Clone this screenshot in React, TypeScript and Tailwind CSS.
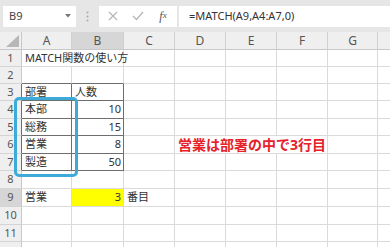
import React from "react";

const colW = ["w-[50px]", "w-[52px]", "w-[51px]", "w-[51px]", "w-[51px]", "w-[51px]", "w-[50px]", "w-[40px]"];
const rowH = ["h-[17px]", "h-[17px]", "h-[17px]", "h-[18px]", "h-[17px]", "h-[18px]", "h-[17px]", "h-[18px]", "h-[18px]", "h-[18px]", "h-[17px]", "h-[18px]"];
const letters = ["A", "B", "C", "D", "E", "F", "G", ""];

type CellDef = {
  text?: string;
  right?: boolean;
  bg?: string;
  darkR?: boolean;
  darkB?: boolean;
  span?: number;
  extra?: string;
};

function rowCells(r: number): CellDef[] {
  const base: CellDef[] = letters.map(() => ({}));
  const tbl = (c: number) => {
    base[c].darkR = true;
    base[c].darkB = true;
  };
  if (r === 1) {
    return [{ text: "MATCH関数の使い方", span: 2 }, {}, {}, {}, {}, {}, {}];
  }
  if (r === 2) {
    base[0].darkB = true;
    base[1].darkB = true;
  }
  if (r >= 3 && r <= 7) {
    tbl(0);
    tbl(1);
  }
  if (r === 3) {
    base[0].text = "部署";
    base[1].text = "人数";
  }
  const data: Record<number, [string, string]> = {
    4: ["本部", "10"],
    5: ["総務", "15"],
    6: ["営業", "8"],
    7: ["製造", "50"],
  };
  if (data[r]) {
    base[0].text = data[r][0];
    base[1].text = data[r][1];
    base[1].right = true;
  }
  if (r === 6) {
    return [
      base[0],
      base[1],
      {},
      { text: "営業は部署の中で3行目", span: 3, extra: "text-[#e5222a] font-bold text-[14px] pl-[2px]" },
      {},
      {},
    ];
  }
  if (r === 9) {
    base[0].text = "営業";
    base[1].text = "3";
    base[1].right = true;
    base[1].bg = "bg-[#ffff00]";
    base[2].text = "番目";
  }
  return base;
}

function Row({ r }: { r: number }) {
  const cells = rowCells(r);
  const selected = r === 9;
  const hdrDark = r >= 3 && r <= 7;
  let col = 0;
  const out: React.ReactNode[] = [];
  cells.forEach((c, i) => {
    const span = c.span ?? 1;
    const w = span > 1 ? (col === 0 ? "w-[102px]" : "w-[153px]") : colW[col];
    out.push(
      <div
        key={i}
        className={`${w} shrink-0 h-full border-r border-b ${c.darkR ? "border-r-[#6e6e6e]" : "border-r-[#dadada]"} ${
          c.darkB ? "border-b-[#6e6e6e]" : "border-b-[#dadada]"
        } ${c.bg ?? ""} flex items-center ${c.right ? "justify-end pr-[2px]" : "pl-[3px]"} whitespace-nowrap overflow-visible ${
          c.extra ?? "text-[11px] text-[#333]"
        }`}
      >
        {c.text}
      </div>
    );
    col += span;
  });
  return (
    <div className={`flex ${rowH[r - 1]}`}>
      <div
        className={`w-[22px] shrink-0 h-full border-r border-b ${hdrDark ? "border-r-[#6e6e6e]" : "border-r-[#c8c8c8]"} border-b-[#d4d4d4] ${
          selected ? "bg-[#d6d6d6]" : "bg-[#efefef]"
        } text-[#555] flex items-center justify-center text-[11px]`}
      >
        {r <= 11 ? r : ""}
      </div>
      {out}
    </div>
  );
}

export default function App() {
  return (
    <div
      className="relative w-[390px] h-[247px] overflow-hidden bg-white"
      style={{ fontFamily: '"Noto Sans", "Noto Sans CJK JP", sans-serif' }}
    >
      {/* Formula bar */}
      <div className="h-[32px] bg-[#e6e6e6] flex items-center pl-[3px]">
        <div className="w-[73px] h-[21px] bg-white flex items-center justify-between pl-[6px] pr-[5px] text-[11px] text-[#444]">
          <span>B9</span>
          <svg width="6" height="4" viewBox="0 0 6 4">
            <path d="M0 0 L6 0 L3 3.5 Z" fill="#777" />
          </svg>
        </div>
        <div className="w-[23px] flex justify-center">
          <svg width="3" height="11" viewBox="0 0 3 11">
            <circle cx="1.5" cy="1.5" r="1" fill="#aaa" />
            <circle cx="1.5" cy="5.5" r="1" fill="#aaa" />
            <circle cx="1.5" cy="9.5" r="1" fill="#aaa" />
          </svg>
        </div>
        <div className="w-[78px] h-[21px] bg-white flex items-center">
          <div className="w-[28px] flex justify-center">
            <svg width="10" height="10" viewBox="0 0 10 10">
              <path d="M1 1 L9 9 M9 1 L1 9" stroke="#b5b5b5" strokeWidth="1.2" fill="none" />
            </svg>
          </div>
          <div className="w-[22px] flex justify-center">
            <svg width="12" height="10" viewBox="0 0 12 10">
              <path d="M1 5 L4.5 8.5 L11 1" stroke="#b5b5b5" strokeWidth="1.2" fill="none" />
            </svg>
          </div>
          <div
            className="w-[28px] flex justify-center text-[12px] italic text-[#555]"
            style={{ fontFamily: '"Liberation Serif", serif' }}
          >
            f<span className="text-[9px] relative top-[2px]">x</span>
          </div>
        </div>
        <div className="ml-[2px] flex-1 h-[21px] bg-white flex items-center pl-[10px] text-[11px] text-[#333] whitespace-nowrap">
          =MATCH(A9,A4:A7,0)
        </div>
      </div>

      {/* Column headers */}
      <div className="flex h-[18px]">
        <div className="w-[22px] shrink-0 h-full bg-[#efefef] border-r border-b border-r-[#c8c8c8] border-b-[#c8c8c8] flex items-end justify-end p-[2px]">
          <svg width="13" height="12" viewBox="0 0 13 12">
            <path d="M13 0 L13 12 L0 12 Z" fill="#b7b7b7" />
          </svg>
        </div>
        {letters.map((l, i) => (
          <div
            key={i}
            className={`${colW[i]} shrink-0 h-full border-r border-b border-r-[#d0d0d0] border-b-[#c8c8c8] ${
              i === 1 ? "bg-[#d6d6d6]" : "bg-[#efefef]"
            } text-[#555] flex items-center justify-center text-[12px]`}
          >
            {l}
          </div>
        ))}
      </div>

      {/* Rows */}
      {Array.from({ length: 12 }, (_, i) => (
        <Row key={i} r={i + 1} />
      ))}

      {/* Blue highlight frame */}
      <div className="absolute left-[14px] top-[97px] w-[64px] h-[80px] border-[3px] border-[#3eaad8] rounded-[5px]" />
    </div>
  );
}
